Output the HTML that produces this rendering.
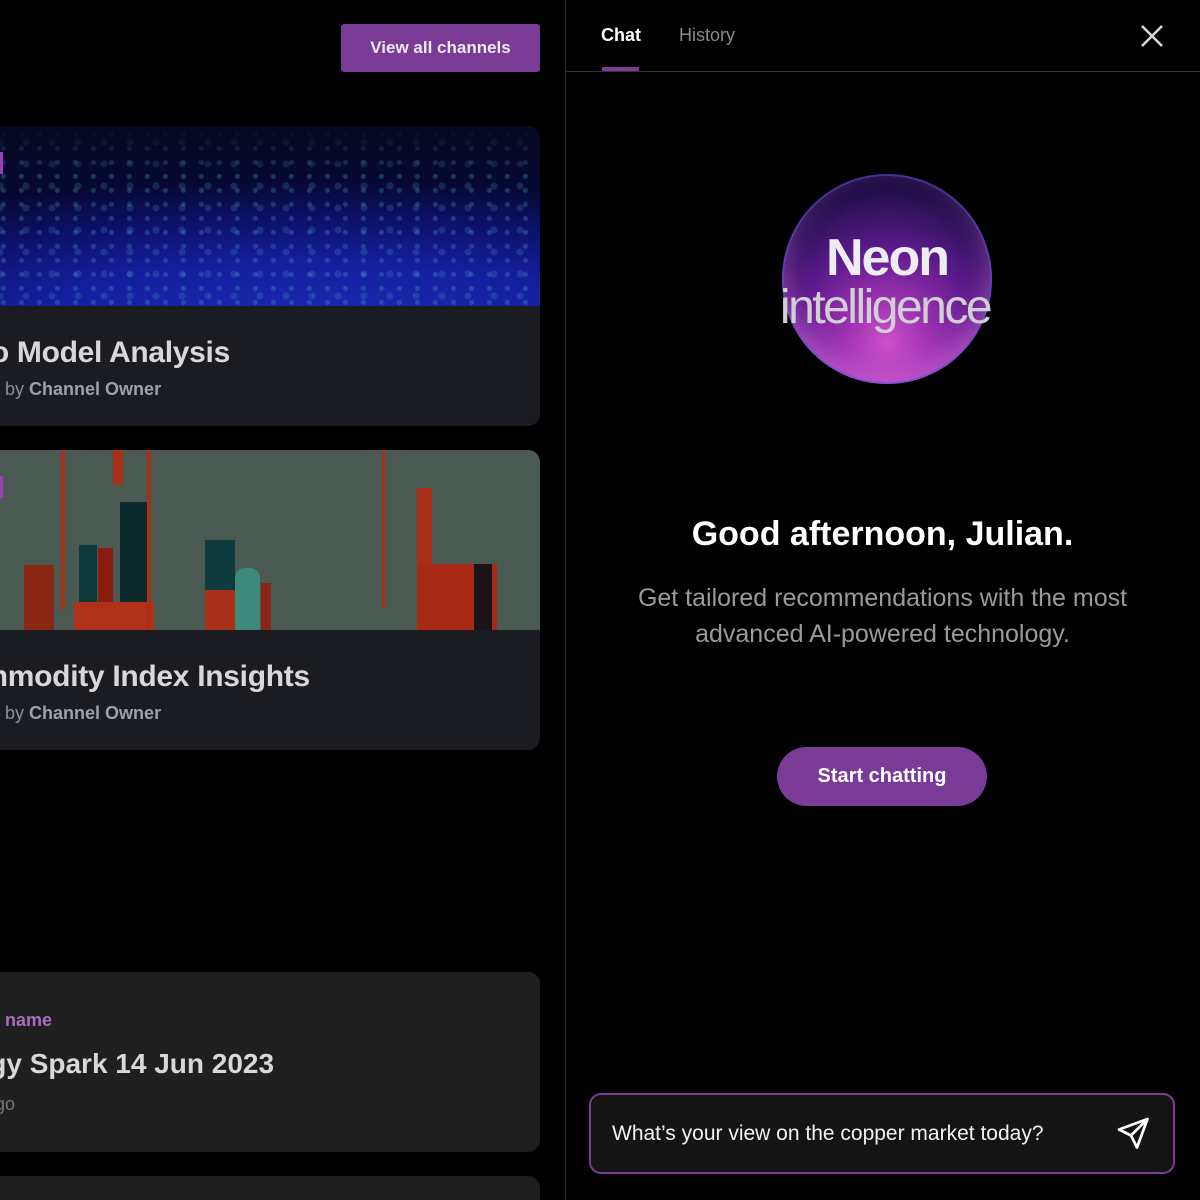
<!DOCTYPE html>
<html><head><meta charset="utf-8"><style>
*{margin:0;padding:0;box-sizing:border-box}
html,body{width:1200px;height:1200px;overflow:hidden}
body{background:#000;font-family:"Liberation Sans",Arial,sans-serif;position:relative;color:#fff}
.abs{position:absolute}
.btn{left:341px;top:24px;width:199px;height:48px;background:#7a3b96;border-radius:3px;color:#f0e8f4;font-size:17px;font-weight:bold;display:flex;align-items:center;justify-content:center}
.card{left:-20px;width:560px;border-radius:12px;overflow:hidden;background:#1a1c22}
.title{font-size:30px;font-weight:bold;color:#d8d8dc;white-space:nowrap;letter-spacing:-0.3px}
.by{font-size:18px;color:#8d8f95;white-space:nowrap}
.by b{color:#9ea0a6}
</style></head><body>
<div class="abs btn">View all channels</div>

<div class="abs card" style="top:126px;height:300px">
  <div style="height:180px;background:radial-gradient(ellipse 120% 80% at 60% 110%,#1a2ab0 0%,#1520a0 40%,#0c1270 70%,#070830 100%);position:relative">
    <div class="abs" style="inset:0;background:radial-gradient(circle at 30% 60%,rgba(80,160,200,.3) 0 2px,transparent 3px) 0 0/18px 14px,radial-gradient(circle at 50% 50%,rgba(90,170,210,.2) 0 3px,transparent 4px) 7px 5px/26px 22px;"></div>
    <div class="abs" style="left:0;top:0;right:0;height:50px;background:linear-gradient(#070820,transparent)"></div>
    <div class="abs" style="left:20px;top:26px;width:3px;height:22px;background:#9b3fb5"></div>
  </div>
  <div class="abs title" style="left:-66px;top:210px">Crypto Model Analysis</div>
  <div class="abs by" style="left:-37px;top:253px">Owned by <b>Channel Owner</b></div>
</div>

<div class="abs card" style="top:450px;height:300px">
  <div style="height:180px;background:#4a5a52;position:relative;overflow:hidden">
    <div class="abs" style="left:20px;top:26px;width:3px;height:22px;background:#9b3fb5"></div>
    <div class="abs" style="left:44px;top:115px;width:30px;height:65px;background:#8a2616"></div>
    <div class="abs" style="left:81px;top:0;width:4px;height:160px;background:#a83018"></div>
    <div class="abs" style="left:99px;top:95px;width:18px;height:85px;background:#0f3a3c"></div>
    <div class="abs" style="left:118px;top:98px;width:15px;height:82px;background:#8a1c10"></div>
    <div class="abs" style="left:140px;top:52px;width:27px;height:128px;background:#0c2a2c"></div>
    <div class="abs" style="left:94px;top:152px;width:80px;height:28px;background:#b03018"></div>
    <div class="abs" style="left:133px;top:0;width:10px;height:35px;background:#a83018"></div>
    <div class="abs" style="left:167px;top:0;width:4px;height:180px;background:#a83018"></div>
    <div class="abs" style="left:225px;top:90px;width:30px;height:50px;background:#0f3a3c"></div>
    <div class="abs" style="left:225px;top:140px;width:30px;height:40px;background:#a83018"></div>
    <div class="abs" style="left:255px;top:118px;width:25px;height:62px;background:#3e8a7a;border-radius:10px 10px 0 0"></div>
    <div class="abs" style="left:281px;top:133px;width:10px;height:47px;background:#8a2616"></div>
    <div class="abs" style="left:402px;top:0;width:3px;height:158px;background:#a83018"></div>
    <div class="abs" style="left:437px;top:38px;width:15px;height:80px;background:#a83018"></div>
    <div class="abs" style="left:437px;top:114px;width:80px;height:66px;background:#a82a14"></div>
    <div class="abs" style="left:494px;top:114px;width:18px;height:66px;background:#1a1418"></div>
  </div>
  <div class="abs title" style="left:-38px;top:210px">Commodity Index Insights</div>
  <div class="abs by" style="left:-37px;top:253px">Owned by <b>Channel Owner</b></div>
</div>

<div class="abs card" style="top:972px;height:180px;background:#1f1f1f">
  <div class="abs" style="left:-51px;top:38px;font-size:18px;font-weight:bold;color:#a86cc0;white-space:nowrap">Channel name</div>
  <div class="abs" style="left:-53px;top:76px;font-size:28px;font-weight:bold;color:#d8d8d8;white-space:nowrap">Energy Spark 14 Jun 2023</div>
  <div class="abs" style="left:-53px;top:122px;font-size:18px;color:#777;white-space:nowrap">2 days ago</div>
</div>
<div class="abs card" style="top:1176px;height:40px;background:#1f1f1f"></div>

<div class="abs" style="left:565px;top:0;width:650px;height:1200px;background:#000;border-left:1px solid #2a2a2a;border-top-right-radius:20px"></div>
<div class="abs" style="left:566px;top:71px;width:634px;height:1px;background:#333"></div>
<div class="abs" style="left:601px;top:25px;font-size:18px;font-weight:bold;color:#fff">Chat</div>
<div class="abs" style="left:679px;top:25px;font-size:18px;color:#8a8a8a">History</div>
<div class="abs" style="left:602px;top:67px;width:37px;height:4px;background:#7a3b96"></div>
<svg class="abs" style="left:1140px;top:24px" width="24" height="24" viewBox="0 0 24 24"><path d="M2 2L22 22M22 2L2 22" stroke="#ddd" stroke-width="2.4"/></svg>

<div class="abs" style="left:782px;top:174px;width:210px;height:210px;border-radius:50%;background:radial-gradient(circle at 50% 80%,#d050c8 0%,#9a30b0 22%,#5a1a8a 48%,#24104e 75%,#0a0520 100%);box-shadow:inset 0 0 0 2px rgba(90,80,220,.5),inset 0 -14px 28px rgba(230,120,230,.55)"></div>
<div class="abs" style="left:782px;top:228px;width:210px;text-align:center;font-size:52px;font-weight:bold;color:#eeeef2;letter-spacing:-2px">Neon</div>
<div class="abs" style="left:730px;top:280px;width:310px;text-align:center;font-size:48px;color:#cfcfd4;letter-spacing:-2.5px">intelligence</div>

<div class="abs" style="left:565px;top:515px;width:635px;text-align:center;font-size:34px;font-weight:bold;color:#fff">Good afternoon, Julian.</div>
<div class="abs" style="left:565px;top:580px;width:635px;text-align:center;font-size:25px;line-height:36px;color:#9a9a9a">Get tailored recommendations with the most<br>advanced AI-powered technology.</div>
<div class="abs" style="left:777px;top:747px;width:210px;height:59px;border-radius:30px;background:#7a3b96;font-size:20px;font-weight:bold;display:flex;align-items:center;justify-content:center;color:#fff">Start chatting</div>

<div class="abs" style="left:589px;top:1093px;width:586px;height:81px;border:2px solid #7a3b96;border-radius:12px;background:#141414"></div>
<div class="abs" style="left:612px;top:1122px;font-size:21px;color:#f2f2f2">What’s your view on the copper market today?</div>
<svg class="abs" style="left:1116px;top:1116px" width="36" height="36" viewBox="0 0 24 24"><path d="M21 2L2 9l8 4 4 8z M21 2L10 13" fill="none" stroke="#fff" stroke-width="1.8" stroke-linejoin="round"/></svg>
</body></html>
